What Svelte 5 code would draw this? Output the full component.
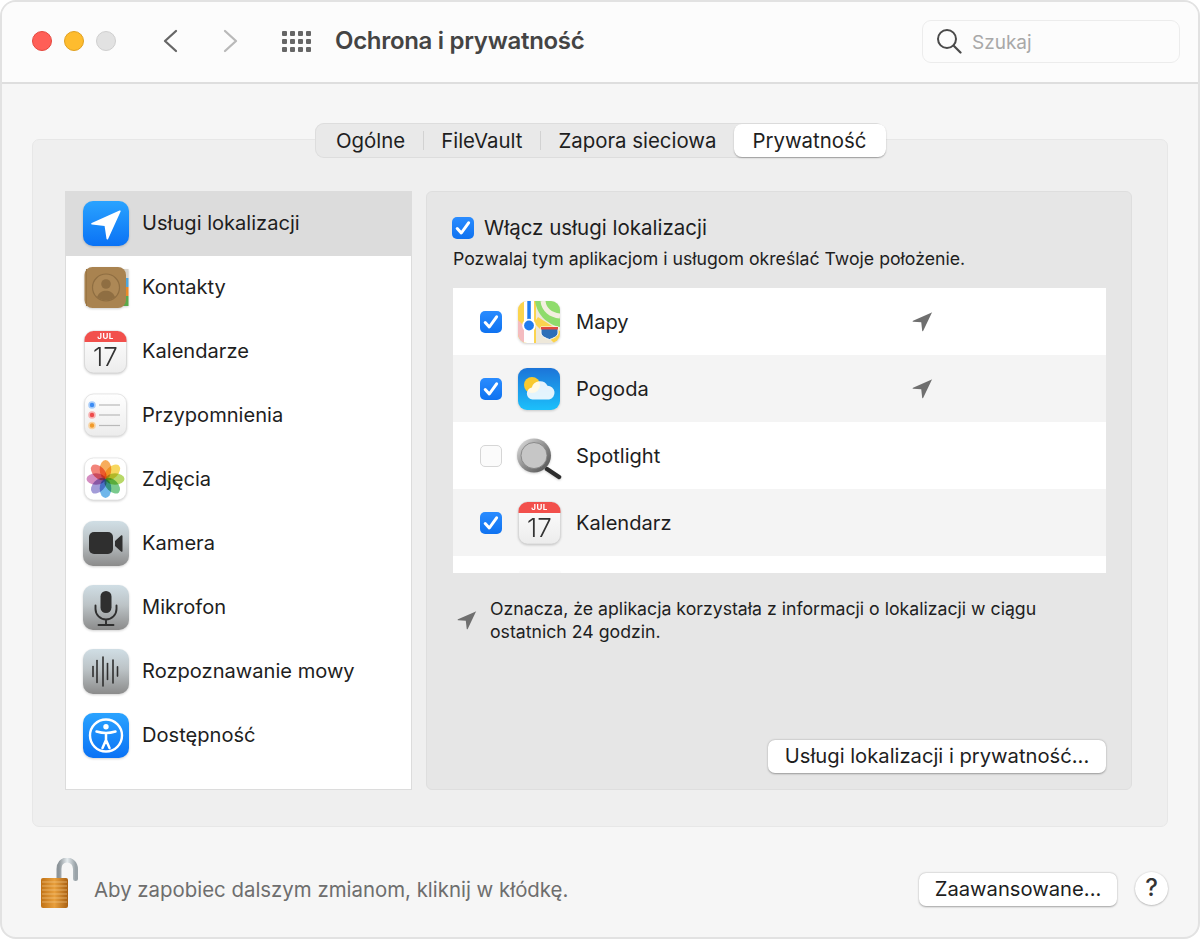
<script>
  const sideItems = [
    { name: "Usługi lokalizacji", icon: "location", active: true },
    { name: "Kontakty", icon: "contacts" },
    { name: "Kalendarze", icon: "calendar" },
    { name: "Przypomnienia", icon: "reminders" },
    { name: "Zdjęcia", icon: "photos" },
    { name: "Kamera", icon: "camera" },
    { name: "Mikrofon", icon: "mic" },
    { name: "Rozpoznawanie mowy", icon: "speech" },
    { name: "Dostępność", icon: "access" },
  ];

  const apps = [
    { name: "Mapy", icon: "maps", checked: true, recent: true },
    { name: "Pogoda", icon: "weather", checked: true, recent: true },
    { name: "Spotlight", icon: "spotlight", checked: false, recent: false },
    { name: "Kalendarz", icon: "calendar", checked: true, recent: false },
  ];

  const tabs = ["Ogólne", "FileVault", "Zapora sieciowa"];
  const petals = [
    ["#f0695c", -45], ["#f59a38", 0], ["#f5cf3c", 45], ["#a9d046", 90],
    ["#5cbf74", 135], ["#4fa6e6", 180], ["#8f86d0", 225], ["#cb74b4", 270],
  ];
  const gridDots = [0, 1, 2, 3, 4, 5, 6, 7, 8, 9, 10, 11];
  const bars = [[11, 5], [15, 11], [21, 14.5], [25.5, 8], [31, 11.5], [35.5, 4.6]];
</script>

{#snippet arrow(size)}
  <svg class="arrow" width={size} height={size} viewBox="0 0 20 20">
    <path d="M19.4 1.2 1 9.2c-.6.3-.4 1 .2 1l7.6.6.9 7.9c.1.6.8.7 1 .2l8.2-17.2c.2-.4-.1-.7-.5-.5z" fill="#6f6f6f" />
  </svg>
{/snippet}

{#snippet check(on)}
  <span class="check" class:on>
    {#if on}
      <svg width="22" height="22" viewBox="0 0 22 22">
        <path d="M5.2 11.6 9.3 16 16.6 5.8" fill="none" stroke="#fff" stroke-width="3" stroke-linecap="round" stroke-linejoin="round" />
      </svg>
    {/if}
  </span>
{/snippet}

{#snippet appIcon(kind)}
  <svg class="icon" width="48" height="48" viewBox="0 0 48 48">
    <defs>
      <linearGradient id="blue-{kind}" x1="0" y1="0" x2="0" y2="1"><stop offset="0" stop-color="#2aa3ff" /><stop offset="1" stop-color="#0a72f5" /></linearGradient>
      <linearGradient id="grey-{kind}" x1="0" y1="0" x2="0" y2="1"><stop offset="0" stop-color="#d0dee5" /><stop offset="0.45" stop-color="#bcc3c6" /><stop offset="1" stop-color="#8b8b8b" /></linearGradient>
      <linearGradient id="sky-{kind}" x1="0" y1="0" x2="0" y2="1"><stop offset="0" stop-color="#1c74d8" /><stop offset="1" stop-color="#1cc0fb" /></linearGradient>
      <linearGradient id="paper-{kind}" x1="0" y1="0" x2="0" y2="1"><stop offset="0" stop-color="#ffffff" /><stop offset="1" stop-color="#ececec" /></linearGradient>
      <linearGradient id="ring-{kind}" x1="0" y1="0" x2="1" y2="1"><stop offset="0" stop-color="#e8e8e8" /><stop offset="0.5" stop-color="#8f8f8f" /><stop offset="1" stop-color="#4a4a4a" /></linearGradient>
    </defs>
    {#if kind === "location"}
      <rect x="1" y="1" width="46" height="45" rx="10" fill="url(#blue-location)" />
      <path d="M37.5 10.6 9.7 23c-.9.4-.7 1.5.2 1.6l12.7 1.5 1.9 12.6c.1.9 1.2 1.1 1.6.2l12.5-27.4c.3-.7-.4-1.3-1.1-.9z" fill="#fff" />
    {:else if kind === "contacts"}
      <rect x="40" y="5" width="6.500" height="9" fill="#d8d4cc" />
      <rect x="40" y="14" width="6.500" height="9" fill="#4fa6dd" />
      <rect x="40" y="23" width="6.500" height="9" fill="#e98a2a" />
      <rect x="40" y="32" width="6.500" height="10" fill="#58a94a" />
      <rect x="2.500" y="3" width="41.500" height="41" rx="8" fill="#a98350" />
      <rect x="4" y="5" width="1" height="37" fill="#9a7644" />
      <circle cx="24" cy="23.500" r="13.500" fill="#ad8856" stroke="#8f6e42" stroke-width="1.200" />
      <circle cx="24" cy="20" r="4.800" fill="#8f6e42" />
      <path d="M15 33c2-4.500 5-6.200 9-6.200s7 1.700 9 6.200a13.500 13.500 0 0 1-18 0z" fill="#8f6e42" />
    {:else if kind === "calendar"}
      <rect x="2.500" y="3" width="42" height="42" rx="9" fill="url(#paper-calendar)" stroke="#cfcfcf" stroke-width="0.600" />
      <path d="M2.500 14V12a9 9 0 0 1 9-9h24a9 9 0 0 1 9 9v2z" fill="#f2504c" />
      <text class="jul" x="23.500" y="11" text-anchor="middle">JUL</text>
      <text class="day" x="23.500" y="38" text-anchor="middle">17</text>
    {:else if kind === "reminders"}
      <rect x="2.500" y="2" width="42" height="42" rx="9" fill="url(#paper-reminders)" stroke="#d8d8d8" stroke-width="0.600" />
      <g stroke="#b9b9b9" stroke-width="1.200">
        <line x1="17" y1="13" x2="38" y2="13" /><line x1="17" y1="23" x2="38" y2="23" /><line x1="17" y1="33.500" x2="38" y2="33.500" />
      </g>
      <circle cx="10" cy="13" r="3" fill="#3c8cf4" stroke="#a9cdf9" stroke-width="1.600" />
      <circle cx="10" cy="23" r="3" fill="#ee4b4b" stroke="#f7b1b1" stroke-width="1.600" />
      <circle cx="10" cy="33.500" r="3" fill="#f09a2a" stroke="#f8d2a0" stroke-width="1.600" />
    {:else if kind === "photos"}
      <rect x="2.500" y="2" width="42" height="42" rx="9" fill="#fff" stroke="#dcdcdc" stroke-width="0.600" />
      <g class="flower">
        {#each petals as [fill, deg]}
          <ellipse cx="23.500" cy="13.500" rx="5.800" ry="9.500" {fill} opacity="0.82" transform="rotate({deg} 23.500 23)" />
        {/each}
      </g>
    {:else if kind === "camera"}
      <rect x="1" y="1" width="46" height="45" rx="10" fill="url(#grey-camera)" />
      <rect x="7" y="12" width="24" height="22" rx="5" fill="#2f2f2f" />
      <path d="M33 21 39 15.500c.7-.6 1.500-.2 1.500.6v14.800c0 .9-.8 1.300-1.500.6L33 26z" fill="#2f2f2f" />
    {:else if kind === "mic"}
      <rect x="1" y="1" width="46" height="45" rx="10" fill="url(#grey-mic)" />
      <rect x="18.500" y="7" width="11" height="22" rx="5.500" fill="#2f2f2f" />
      <path d="M13.500 21.500v3.500a10.500 10.500 0 0 0 21 0v-3.500M24 35.500V40.500M16.500 41h15" fill="none" stroke="#2f2f2f" stroke-width="1.900" stroke-linecap="round" />
    {:else if kind === "speech"}
      <rect x="1" y="1" width="46" height="45" rx="10" fill="url(#grey-speech)" />
      <g stroke="#2f2f2f" stroke-width="1.600" stroke-linecap="round">
        {#each bars as [x, h]}
          <line x1={x} y1={23.5 - h} x2={x} y2={23.5 + h} />
        {/each}
      </g>
    {:else if kind === "access"}
      <rect x="1" y="1" width="46" height="45" rx="10" fill="url(#blue-access)" />
      <circle cx="24" cy="23.500" r="16" fill="none" stroke="#fff" stroke-width="2.400" />
      <circle cx="24" cy="14.800" r="2.700" fill="#fff" />
      <path d="M14.500 19.500c3.500 1 6 1.500 9.500 1.500s6-.5 9.500-1.500M24 21v7M20.500 36l3.500-8 3.500 8" fill="none" stroke="#fff" stroke-width="2.500" stroke-linecap="round" stroke-linejoin="round" />
    {:else if kind === "maps"}
      <clipPath id="maps-clip"><rect x="2" y="3" width="42" height="42" rx="9" /></clipPath>
      <g clip-path="url(#maps-clip)">
        <rect x="2" y="3" width="42" height="42" fill="#eee8da" />
        <path d="M2 3h18v42H2z" fill="#fbd44e" />
        <path d="M2 22 8 28v17H2z" fill="#f4bcc0" />
        <path d="M19 3h25v26C33 27 21 18 19 3z" fill="#8fdc6c" />
        <path d="M27 3c1 9 8 14 17 15" fill="none" stroke="#f3efdf" stroke-width="5" />
        <path d="M18 25 38 45h6V33L22 19z" fill="#fbd44e" />
        <rect x="8" y="3" width="10" height="42" fill="#fff" />
        <rect x="11.300" y="3" width="3.500" height="20" fill="#1f7cf0" />
        <circle cx="13" cy="27.500" r="6.800" fill="#fff" />
        <circle cx="13" cy="27.500" r="4.900" fill="#1f7cf0" />
        <path d="M25 29h17v6c0 3-4 5-8.500 6.500C29 40 25 38 25 35z" fill="#2d6fb8" stroke="#fff" stroke-width="1" />
        <rect x="25" y="29" width="17" height="2.500" fill="#e24a3e" />
      </g>
    {:else if kind === "weather"}
      <rect x="2" y="3" width="42" height="42" rx="9" fill="url(#sky-weather)" />
      <circle cx="16" cy="20" r="8" fill="#f8c92e" />
      <path d="M16.500 34.500a6 6 0 0 1-.7-11.900 8.500 8.500 0 0 1 15.700-1.900 7 7 0 0 1 1.700 13.800z" fill="#fff" opacity="0.88" />
    {:else if kind === "spotlight"}
      <path d="M31 37 43 45" stroke="#2d2d2d" stroke-width="4.500" stroke-linecap="round" />
      <circle cx="18" cy="23.500" r="17" fill="url(#ring-spotlight)" />
      <circle cx="18" cy="23.500" r="13" fill="#c6c6c6" stroke="#7d7d7d" stroke-width="0.800" />
    {/if}
  </svg>
{/snippet}

<div class="window">
  <header class="titlebar">
    <div class="lights">
      <span class="light red"></span>
      <span class="light yellow"></span>
      <span class="light grey"></span>
    </div>
    <div class="nav">
      <svg width="16" height="24" viewBox="0 0 16 24"><path d="M14 2 3 12l11 10" fill="none" stroke="#666" stroke-width="2.300" stroke-linecap="round" stroke-linejoin="round" /></svg>
      <svg width="16" height="24" viewBox="0 0 16 24"><path d="M2 2l11 10L2 22" fill="none" stroke="#b9b9b9" stroke-width="2.300" stroke-linecap="round" stroke-linejoin="round" /></svg>
    </div>
    <div class="dots">
      {#each gridDots as d (d)}<span></span>{/each}
    </div>
    <h1>Ochrona i prywatność</h1>
    <div class="search">
      <svg width="26" height="26" viewBox="0 0 26 26"><circle cx="11" cy="11" r="9" fill="none" stroke="#4a4a4a" stroke-width="2" /><path d="M17.500 17.500 24.500 24.500" stroke="#4a4a4a" stroke-width="2.200" stroke-linecap="round" /></svg>
      <span>Szukaj</span>
    </div>
  </header>

  <main class="content">
    <nav class="tabs">
      {#each tabs as tab, i}
        {#if i > 0}<i class="sep"></i>{/if}
        <span class="tab">{tab}</span>
      {/each}
      <span class="tab current">Prywatność</span>
    </nav>

    <section class="panel">
      <ul class="sidebar">
        {#each sideItems as item}
          <li class:active={item.active}>
            {@render appIcon(item.icon)}
            <span>{item.name}</span>
          </li>
        {/each}
      </ul>

      <div class="pane">
        <div class="master">
          {@render check(true)}
          <span>Włącz usługi lokalizacji</span>
        </div>
        <p class="hint">Pozwalaj tym aplikacjom i usługom określać Twoje położenie.</p>

        <div class="applist">
          {#each apps as app}
            <div class="approw">
              {@render check(app.checked)}
              {@render appIcon(app.icon)}
              <span class="appname">{app.name}</span>
              {#if app.recent}{@render arrow(21)}{/if}
            </div>
          {/each}
          <div class="approw stub"><i></i></div>
        </div>

        <div class="legend">
          {@render arrow(20)}
          <p>Oznacza, że aplikacja korzystała z informacji o lokalizacji w ciągu<br />ostatnich 24 godzin.</p>
        </div>

        <button class="btn privacy">Usługi lokalizacji i prywatność...</button>
      </div>
    </section>

    <footer class="bottom">
      <svg class="lock" width="42" height="52" viewBox="0 0 42 52">
        <defs>
          <linearGradient id="shackle" x1="0" y1="0" x2="1" y2="0"><stop offset="0" stop-color="#8c9499" /><stop offset="0.5" stop-color="#e6ecef" /><stop offset="1" stop-color="#9aa3a8" /></linearGradient>
          <linearGradient id="brass" x1="0" y1="0" x2="1" y2="0"><stop offset="0" stop-color="#c07216" /><stop offset="0.5" stop-color="#e89f3c" /><stop offset="1" stop-color="#a96012" /></linearGradient>
        </defs>
        <path d="M20 24V11c0-5 3-9 8-9s8.500 4 8.500 9v9.500" fill="none" stroke="url(#shackle)" stroke-width="5" stroke-linecap="round" />
        <rect x="2" y="20" width="27" height="30" rx="2" fill="url(#brass)" />
        <g stroke="#f6cc8e" stroke-width="0.800" opacity="0.8">
          <line x1="3" y1="24" x2="28" y2="24" /><line x1="3" y1="28" x2="28" y2="28" /><line x1="3" y1="32" x2="28" y2="32" /><line x1="3" y1="36" x2="28" y2="36" /><line x1="3" y1="40" x2="28" y2="40" /><line x1="3" y1="44" x2="28" y2="44" />
        </g>
      </svg>
      <span class="locktext">Aby zapobiec dalszym zmianom, kliknij w kłódkę.</span>
      <button class="btn advanced">Zaawansowane...</button>
      <button class="help">?</button>
    </footer>
  </main>
</div>

<style>
  :global(body) {
    margin: 0;
    background: #fff;
  }

  .window {
    box-sizing: border-box;
    width: 1200px;
    height: 939px;
    border: 2px solid #e2e2e2;
    border-radius: 16px;
    background: #f6f6f6;
    overflow: hidden;
    font-family: Inter, "Noto Sans", sans-serif;
    color: #1e1e1e;
  }

  .titlebar {
    display: flex;
    align-items: center;
    box-sizing: border-box;
    height: 82px;
    padding: 0 18px 2px 30px;
    background: #fcfcfc;
    border-bottom: 2px solid #dedede;
  }

  .lights {
    display: flex;
    gap: 12px;
  }

  .light {
    box-sizing: border-box;
    width: 20px;
    height: 20px;
    border-radius: 50%;
    border: 1px solid;
  }

  .red { background: #ff5f57; border-color: #e5483f; }
  .yellow { background: #febc2e; border-color: #e0a020; }
  .grey { background: #e2e2e2; border-color: #cfcfcf; }

  .nav {
    display: flex;
    gap: 45px;
    margin-left: 46px;
  }

  .dots {
    display: grid;
    grid-template-columns: repeat(4, 5px);
    gap: 3px;
    margin-left: 43px;
  }

  .dots span {
    width: 5px;
    height: 5px;
    border-radius: 1px;
    background: #666;
  }

  h1 {
    margin: 0 0 1px 24px;
    font-size: 24px;
    font-weight: 600;
    letter-spacing: -0.3px;
    color: #444;
  }

  .search {
    display: flex;
    align-items: center;
    gap: 10px;
    box-sizing: border-box;
    width: 258px;
    height: 43px;
    margin-left: auto;
    padding: 0 13px;
    border: 1.500px solid #ececec;
    border-radius: 9px;
    font-size: 19px;
    color: #a8a8a8;
  }

  .search span {
    margin-top: 2px;
  }

  .content {
    padding: 39px 30px 0;
  }

  .tabs {
    display: flex;
    align-items: center;
    position: relative;
    z-index: 1;
    box-sizing: border-box;
    width: 570px;
    height: 35px;
    margin: 0 auto -19px;
    padding-left: 3px;
    border-radius: 9px;
    background: #e9e9e9;
    box-shadow: inset 0 0 0 1px #dddddd;
    font-size: 20.400px;
    color: #1e1e1e;
  }

  .tab {
    padding: 0 18px;
    white-space: nowrap;
  }

  .tab.current {
    margin-left: auto;
    height: 33px;
    line-height: 33px;
    padding: 0 20px 0 18px;
    background: #fff;
    border-radius: 8px;
    box-shadow: 0 1px 1.500px rgba(0, 0, 0, 0.3);
  }

  .sep {
    flex: none;
    width: 1px;
    height: 19px;
    margin: 0 -0.500px;
    background: #d2d2d2;
  }

  .panel {
    display: flex;
    gap: 14px;
    box-sizing: border-box;
    height: 688px;
    padding: 51px 35px 36px 32px;
    background: #efefef;
    border: 1px solid #e7e7e7;
    border-radius: 7px;
  }

  .sidebar {
    box-sizing: border-box;
    width: 347px;
    margin: 0;
    padding: 0;
    list-style: none;
    background: #fff;
    border: 1px solid #dcdcdc;
  }

  .sidebar li {
    display: flex;
    align-items: center;
    gap: 12px;
    height: 64px;
    padding-left: 16px;
    font-size: 20.100px;
  }

  .sidebar li span {
    margin-bottom: 2px;
  }

  .sidebar li.active {
    background: #dcdcdc;
  }

  .icon {
    flex: none;
    filter: drop-shadow(0 1px 1px rgba(0, 0, 0, 0.18));
  }

  .pane {
    display: flex;
    flex-direction: column;
    flex: 1;
    box-sizing: border-box;
    padding: 0 25px 16px 25px;
    background: #e6e6e6;
    border: 1px solid #dedede;
    border-radius: 6px;
  }

  .master {
    display: flex;
    align-items: center;
    gap: 10px;
    margin-top: 23px;
    font-size: 20.500px;
  }

  .hint {
    margin: 7px 0 0 1px;
    font-size: 17.700px;
    line-height: 24px;
  }

  .applist {
    margin-top: 17px;
    margin-left: 1px;
    background: #fff;
  }

  .approw {
    display: flex;
    align-items: center;
    height: 67px;
    padding-left: 27px;
    font-size: 20.100px;
  }

  .approw:nth-child(even) {
    background: #f4f4f4;
  }

  .approw.stub {
    height: 17px;
    padding-left: 66px;
    align-items: flex-end;
    overflow: hidden;
  }

  .stub i {
    width: 42px;
    height: 3px;
    border-radius: 8px 8px 0 0;
    background: #fbfbfb;
  }

  .approw .icon {
    margin-left: 14px;
  }

  .appname {
    width: 336px;
    margin-left: 12px;
  }

  .check {
    display: inline-flex;
    flex: none;
    box-sizing: border-box;
    width: 22px;
    height: 22px;
    border-radius: 5px;
    background: #fbfbfb;
    border: 1px solid #d6d6d6;
  }

  .check.on {
    background: linear-gradient(#2a8cff, #0f72f0);
    border: none;
  }

  .legend {
    display: flex;
    align-items: center;
    gap: 13px;
    margin: 24px 0 0 5px;
  }

  .legend p {
    margin: 0;
    font-size: 17.700px;
    line-height: 23px;
  }

  .btn {
    box-sizing: border-box;
    height: 33px;
    padding: 0 0 2px;
    border: none;
    border-radius: 7px;
    background: #fff;
    box-shadow: 0 0.500px 2px rgba(0, 0, 0, 0.35);
    font-family: inherit;
    font-size: 20.200px;
    color: #1e1e1e;
  }

  .privacy {
    width: 338px;
    margin: auto 0 0 auto;
  }

  .bottom {
    display: flex;
    align-items: center;
    height: 109px;
    padding: 0 0 0 7px;
  }

  .lock {
    margin-top: 4px;
  }

  .locktext {
    margin-left: 13px;
    margin-top: 16px;
    font-size: 20.400px;
    color: #6e6e6e;
  }

  .advanced {
    width: 198px;
    margin-left: auto;
    margin-top: 15px;
  }

  .help {
    box-sizing: border-box;
    width: 33px;
    height: 33px;
    margin: 13px 0 0 18px;
    padding: 0 0 2px;
    border: none;
    border-radius: 50%;
    background: #fff;
    box-shadow: 0 0.500px 2px rgba(0, 0, 0, 0.35);
    font-family: inherit;
    font-size: 24px;
    font-weight: 500;
    color: #333;
  }

  .jul {
    font-family: Inter, sans-serif;
    font-size: 8px;
    font-weight: 700;
    letter-spacing: 0.5px;
    fill: #fff;
  }

  .day {
    font-family: Inter, sans-serif;
    font-size: 26px;
    font-weight: 300;
    fill: #333;
  }

  .flower {
    isolation: isolate;
  }

  .flower ellipse {
    mix-blend-mode: multiply;
  }
</style>
